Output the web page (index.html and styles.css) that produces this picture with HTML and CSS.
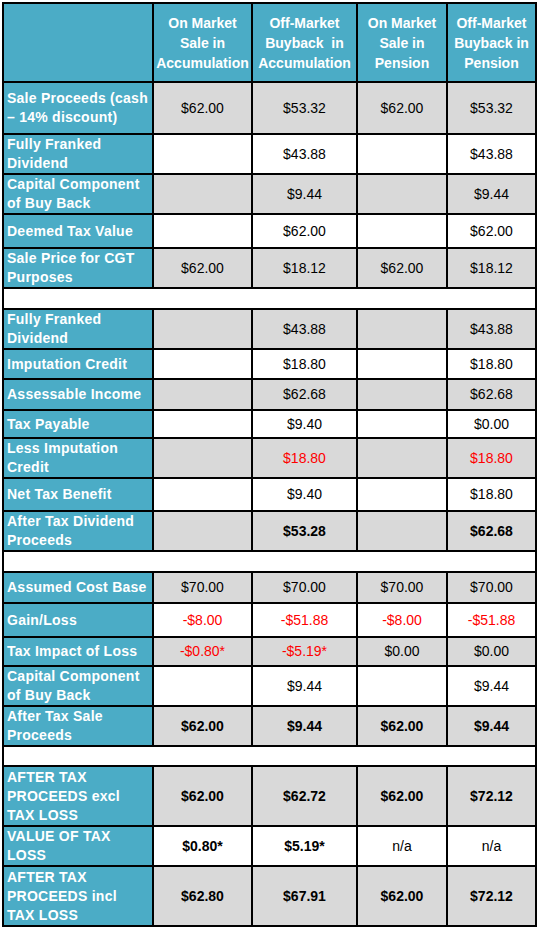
FILE: index.html
```html
<!DOCTYPE html>
<html>
<head>
<meta charset="utf-8">
<link rel="stylesheet" href="styles.css">
</head>
<body>
<table class="cmp">
  <colgroup>
    <col class="c-label"><col class="c-a"><col class="c-b"><col class="c-c"><col class="c-d">
  </colgroup>
  <tr class="h79">
    <th class="lbl"></th>
    <th>On Market<br>Sale in<br>Accumulation</th>
    <th>Off-Market<br>Buyback&nbsp; in<br>Accumulation</th>
    <th>On Market<br>Sale in<br>Pension</th>
    <th>Off-Market<br>Buyback in<br>Pension</th>
  </tr>
  <tr class="grey h52"><td class="lbl">Sale Proceeds (cash<br>– 14% discount)</td><td>$62.00</td><td>$53.32</td><td>$62.00</td><td>$53.32</td></tr>
  <tr class="white h40"><td class="lbl">Fully Franked<br>Dividend</td><td></td><td>$43.88</td><td></td><td>$43.88</td></tr>
  <tr class="grey h40"><td class="lbl">Capital Component<br>of Buy Back</td><td></td><td>$9.44</td><td></td><td>$9.44</td></tr>
  <tr class="white h34"><td class="lbl">Deemed Tax Value</td><td></td><td>$62.00</td><td></td><td>$62.00</td></tr>
  <tr class="grey h40"><td class="lbl">Sale Price for CGT<br>Purposes</td><td>$62.00</td><td>$18.12</td><td>$62.00</td><td>$18.12</td></tr>
  <tr class="sep h21"><td colspan="5"></td></tr>
  <tr class="grey h39"><td class="lbl">Fully Franked<br>Dividend</td><td></td><td>$43.88</td><td></td><td>$43.88</td></tr>
  <tr class="white h30"><td class="lbl">Imputation Credit</td><td></td><td>$18.80</td><td></td><td>$18.80</td></tr>
  <tr class="grey h31"><td class="lbl">Assessable Income</td><td></td><td>$62.68</td><td></td><td>$62.68</td></tr>
  <tr class="white h28"><td class="lbl">Tax Payable</td><td></td><td>$9.40</td><td></td><td>$0.00</td></tr>
  <tr class="grey h40"><td class="lbl">Less Imputation<br>Credit</td><td></td><td class="neg">$18.80</td><td></td><td class="neg">$18.80</td></tr>
  <tr class="white h33"><td class="lbl">Net Tax Benefit</td><td></td><td>$9.40</td><td></td><td>$18.80</td></tr>
  <tr class="grey h40"><td class="lbl">After Tax Dividend<br>Proceeds</td><td></td><td class="b">$53.28</td><td></td><td class="b">$62.68</td></tr>
  <tr class="sep h21"><td colspan="5"></td></tr>
  <tr class="grey h31"><td class="lbl">Assumed Cost Base</td><td>$70.00</td><td>$70.00</td><td>$70.00</td><td>$70.00</td></tr>
  <tr class="white h34"><td class="lbl">Gain/Loss</td><td class="neg">-$8.00</td><td class="neg">-$51.88</td><td class="neg">-$8.00</td><td class="neg">-$51.88</td></tr>
  <tr class="grey h29"><td class="lbl">Tax Impact of Loss</td><td class="neg">-$0.80*</td><td class="neg">-$5.19*</td><td>$0.00</td><td>$0.00</td></tr>
  <tr class="white h40"><td class="lbl">Capital Component<br>of Buy Back</td><td></td><td>$9.44</td><td></td><td>$9.44</td></tr>
  <tr class="grey h40"><td class="lbl">After Tax Sale<br>Proceeds</td><td class="b">$62.00</td><td class="b">$9.44</td><td class="b">$62.00</td><td class="b">$9.44</td></tr>
  <tr class="sep h20"><td colspan="5"></td></tr>
  <tr class="grey h60"><td class="lbl">AFTER TAX<br>PROCEEDS excl<br>TAX LOSS</td><td class="b">$62.00</td><td class="b">$62.72</td><td class="b">$62.00</td><td class="b">$72.12</td></tr>
  <tr class="white h40"><td class="lbl">VALUE OF TAX<br>LOSS</td><td class="b">$0.80*</td><td class="b">$5.19*</td><td>n/a</td><td>n/a</td></tr>
  <tr class="grey h60"><td class="lbl">AFTER TAX<br>PROCEEDS incl<br>TAX LOSS</td><td class="b">$62.80</td><td class="b">$67.91</td><td class="b">$62.00</td><td class="b">$72.12</td></tr>
</table>
</body>
</html>
```

FILE: styles.css
```css
html, body {
  margin: 0;
  padding: 0;
  background: #ffffff;
}

body {
  padding: 2px 0 0 2px;
  font-family: "Liberation Sans", Arial, sans-serif;
  font-size: 14px;
  color: #000000;
}

.cmp {
  border-collapse: collapse;
  table-layout: fixed;
  width: 535px;
}

.c-label { width: 150px; }
.c-a { width: 99px; }
.c-b { width: 105px; }
.c-c { width: 90px; }
.c-d { width: 89px; }

.cmp th,
.cmp td {
  border: 2px solid #000000;
  padding: 0 1px;
  text-align: center;
  vertical-align: middle;
  line-height: 19px;
  white-space: nowrap;
  overflow: hidden;
}

.cmp th {
  background: #4bacc6;
  color: #ffffff;
  font-weight: bold;
  line-height: 20px;
}

.cmp td.lbl {
  background: #4bacc6;
  color: #ffffff;
  font-weight: bold;
  text-align: left;
  padding-left: 3px;
  letter-spacing: 0.25px;
}

.grey td { background: #d9d9d9; }
.white td { background: #ffffff; }
.sep td { background: #ffffff; }

.neg { color: #ff0000; }
.b { font-weight: bold; }

.h79 { height: 79px; }
.h52 { height: 52px; }
.h40 { height: 40px; }
.h39 { height: 39px; }
.h34 { height: 34px; }
.h33 { height: 33px; }
.h31 { height: 31px; }
.h30 { height: 30px; }
.h29 { height: 29px; }
.h28 { height: 28px; }
.h21 { height: 21px; }
.h20 { height: 20px; }
.h60 { height: 60px; }

.cmp .lbl:empty { background: #4bacc6; }
```
